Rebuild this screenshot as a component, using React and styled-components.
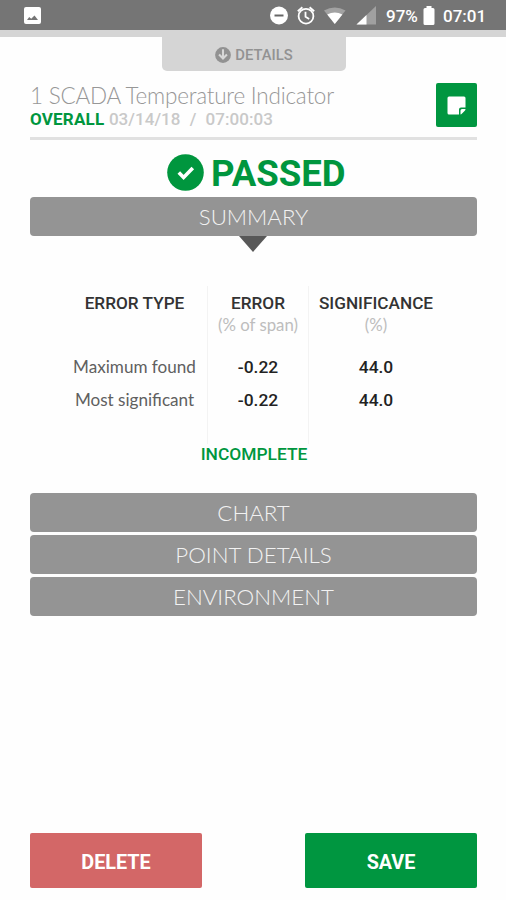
import React from "react";
import styled, { createGlobalStyle } from "styled-components";

const GlobalStyle = createGlobalStyle`
  * {
    box-sizing: border-box;
  }

  body {
    margin: 0;
    background: #fff;
    font-family: Roboto, sans-serif;
  }
`;

const Screen = styled.div`
  display: flex;
  flex-direction: column;
  width: 506px;
  height: 900px;
  background: #fefefe;
  overflow: hidden;
`;

const StatusBar = styled.div`
  display: flex;
  align-items: center;
  height: 30px;
  padding: 1px 19px 0 24px;
  background: #757575;
  color: #fff;
`;

const StatusIcons = styled.div`
  display: flex;
  align-items: center;
  margin-left: auto;
  height: 24px;
`;

const StatusText = styled.span`
  width: ${(props) => props.$width}px;
  margin-left: 8px;
  font-size: 17px;
  font-weight: 500;
  line-height: 24px;
  white-space: nowrap;
`;

const TopStrip = styled.div`
  height: 7px;
  background: #d5d5d5;
`;

const DetailsTab = styled.button`
  display: flex;
  align-items: center;
  justify-content: center;
  gap: 4px;
  align-self: flex-start;
  width: 184px;
  height: 34px;
  margin-left: 162px;
  padding: 1px 0 0;
  border: none;
  border-radius: 0 0 5px 5px;
  background: #d5d5d5;
  color: #929292;
  font: 500 14.8px Roboto, sans-serif;
`;

const Header = styled.header`
  display: flex;
  justify-content: space-between;
  height: 69px;
  margin: 0 29px 0 30px;
  padding-top: 12px;
  border-bottom: 3px solid #e1e1e1;
`;

const Title = styled.h1`
  margin: 0;
  color: #979797;
  font: 300 22.5px/26px Lato, sans-serif;
  letter-spacing: -0.22px;
  white-space: nowrap;
`;

const Subtitle = styled.div`
  color: #c9c9c9;
  font-size: 17px;
  font-weight: 500;
  line-height: 21px;
  letter-spacing: 0.05px;
  word-spacing: 0.3px;
  white-space: pre;
`;

const Overall = styled.span`
  color: #00963e;
  font-weight: 700;
  letter-spacing: 0.2px;
`;

const NoteButton = styled.button`
  display: flex;
  align-items: center;
  justify-content: center;
  width: 41px;
  height: 44px;
  padding: 0;
  border: none;
  border-radius: 2px;
  background: #009640;
`;

const Result = styled.div`
  display: flex;
  align-items: center;
  height: 57px;
  padding: 8px 0 0 167px;
  color: #00963e;
`;

const ResultText = styled.span`
  margin-left: 7px;
  padding-top: 2px;
  font-size: 36.6px;
  font-weight: 700;
  line-height: 40px;
`;

const Bars = styled.div`
  display: flex;
  flex-direction: column;
  gap: 3px;
  margin: 0 29px 0 30px;
`;

const SectionBar = styled.button`
  height: 39px;
  padding: 0;
  border: none;
  border-radius: 4px;
  background: #949494;
  color: #f2f2f2;
  font: 300 22.3px/39px Lato, sans-serif;
`;

const Pointer = styled.div`
  width: 0;
  margin: 0 0 0 239px;
  border: 14px solid transparent;
  border-top: 16px solid #585858;
  border-bottom: none;
`;

const Table = styled.div`
  display: grid;
  grid-template-columns: 123px 101px 135px;
  height: 158px;
  margin: 34px 0 0 84px;
`;

const Column = styled.div`
  padding-top: 6px;
  border-left: ${(props) => (props.$first ? "none" : "1px solid #f3f3f3")};
  text-align: center;
  white-space: nowrap;
`;

const TypeColumn = styled(Column)`
  margin-left: -22px;
`;

const ColumnTitle = styled.div`
  color: #333;
  font-size: 17.2px;
  font-weight: 500;
  line-height: 22px;
`;

const Unit = styled.div`
  height: ${(props) => (props.$short ? 36 : 37)}px;
  color: #bdbdbd;
  font: 400 16.8px/21px Lato, sans-serif;
`;

const Label = styled.div`
  color: #606060;
  font: 400 17.1px/33px Lato, sans-serif;
`;

const Value = styled.div`
  color: #222;
  font-size: 17.4px;
  font-weight: 500;
  line-height: 33px;
`;

const Incomplete = styled.div`
  height: 49px;
  padding-left: 2px;
  color: #00963e;
  font-size: 17.4px;
  font-weight: 500;
  line-height: 20px;
  text-align: center;
`;

const Footer = styled.footer`
  display: flex;
  justify-content: space-between;
  margin: auto 29px 12px 30px;
`;

const ActionButton = styled.button`
  width: 172px;
  height: 55px;
  padding: 3px 0 0;
  border: none;
  border-radius: 2px;
  background: ${(props) => props.$color};
  color: #fff;
  font: 700 19.8px Roboto, sans-serif;
`;

const rows = [
  { label: "Maximum found", error: "-0.22", significance: "44.0" },
  { label: "Most significant", error: "-0.22", significance: "44.0" },
];

const PictureIcon = () => (
  <svg width="17" height="17" viewBox="0 0 17 17">
    <rect width="17" height="17" rx="2" fill="#fff" />
    <path d="M3 13l2.2-3 2 1.800L10.500 8.500l3.500 4.500z" fill="#757575" />
  </svg>
);

const SystemIcons = () => (
  <svg width="108" height="24" viewBox="0 0 108 24">
    <circle cx="9" cy="11.500" r="9" fill="#fff" />
    <path d="M4.500 11.500h9" stroke="#666" strokeWidth="2" />
    <g fill="none" stroke="#fff" strokeWidth="1.800">
      <circle cx="36" cy="12.200" r="7.400" />
      <path d="M35.500 7.700v5l3.700 2.300M27.800 7.200l4.600-4M44.200 7.200l-4.600-4" />
    </g>
    <path d="M54 6.500Q64.800 0.500 75.500 6.500L64.800 20z" fill="#a2a2a2" />
    <path d="M57.200 10.600Q64.800 6.400 72.400 10.600L64.800 20z" fill="#fff" />
    <path d="M106 2v18.500H86.500z" fill="#a0a0a0" />
    <path d="M96.500 11v9.500h-10z" fill="#fff" />
  </svg>
);

const BatteryIcon = () => (
  <svg width="12" height="20" viewBox="0 0 12 20">
    <path d="M3.500 0h5v2H10a1.500 1.500 0 0 1 1.500 1.500v14a1.500 1.500 0 0 1-1.500 1.500H2a1.500 1.500 0 0 1-1.500-1.500v-14A1.500 1.500 0 0 1 2 2h1.500z" fill="#fff" />
  </svg>
);

const ArrowDownIcon = () => (
  <svg width="16" height="16" viewBox="0 0 17 17">
    <circle cx="8.500" cy="8.500" r="8.400" fill="#929292" />
    <path d="M8.500 2.500v9M4.300 8l4.200 4.300L12.700 8" fill="none" stroke="#d8d8d8" strokeWidth="2.200" />
  </svg>
);

const NoteIcon = () => (
  <svg width="19" height="19" viewBox="0 0 19 19">
    <path d="M2 0.500h15q1.500 0 1.500 1.500v9.500h-4.500q-2 0-2 2v5H2Q0.500 18.500 0.500 17V2Q0.500 0.500 2 0.500z" fill="#fff" />
    <path d="M13.500 18.500v-4q0-1.500 1.500-1.500h3.500q0 1-.7 1.700l-3 3q-.6.700-1.300.8z" fill="#fff" />
  </svg>
);

const CheckIcon = () => (
  <svg width="37" height="37" viewBox="0 0 37 37">
    <circle cx="18.500" cy="18.500" r="18.300" fill="#00963e" />
    <path d="M11.800 18.500l4.800 5L25.800 14" fill="none" stroke="#fff" strokeWidth="3.600" />
  </svg>
);

const App = () => {
  return (
    <>
      <GlobalStyle />
      <Screen>
        <StatusBar>
          <PictureIcon />
          <StatusIcons>
            <SystemIcons />
            <StatusText $width={37}>97%</StatusText>
            <BatteryIcon />
            <StatusText $width={44}>07:01</StatusText>
          </StatusIcons>
        </StatusBar>
        <TopStrip />
        <DetailsTab>
          <ArrowDownIcon />
          DETAILS
        </DetailsTab>

        <Header>
          <div>
            <Title>1 SCADA Temperature Indicator</Title>
            <Subtitle>
              <Overall>OVERALL</Overall> 03/14/18  /  07:00:03
            </Subtitle>
          </div>
          <NoteButton aria-label="Note">
            <NoteIcon />
          </NoteButton>
        </Header>

        <Result>
          <CheckIcon />
          <ResultText>PASSED</ResultText>
        </Result>

        <Bars>
          <SectionBar>SUMMARY</SectionBar>
        </Bars>
        <Pointer />

        <Table>
          <TypeColumn $first>
            <ColumnTitle>ERROR TYPE</ColumnTitle>
            <Unit $short />
            {rows.map((row) => (
              <Label key={row.label}>{row.label}</Label>
            ))}
          </TypeColumn>
          <Column>
            <ColumnTitle>ERROR</ColumnTitle>
            <Unit>(% of span)</Unit>
            {rows.map((row) => (
              <Value key={row.label}>{row.error}</Value>
            ))}
          </Column>
          <Column>
            <ColumnTitle>SIGNIFICANCE</ColumnTitle>
            <Unit>(%)</Unit>
            {rows.map((row) => (
              <Value key={row.label}>{row.significance}</Value>
            ))}
          </Column>
        </Table>
        <Incomplete>INCOMPLETE</Incomplete>

        <Bars>
          <SectionBar>CHART</SectionBar>
          <SectionBar>POINT DETAILS</SectionBar>
          <SectionBar>ENVIRONMENT</SectionBar>
        </Bars>

        <Footer>
          <ActionButton $color="#d36767">DELETE</ActionButton>
          <ActionButton $color="#009640">SAVE</ActionButton>
        </Footer>
      </Screen>
    </>
  );
};

export default App;
